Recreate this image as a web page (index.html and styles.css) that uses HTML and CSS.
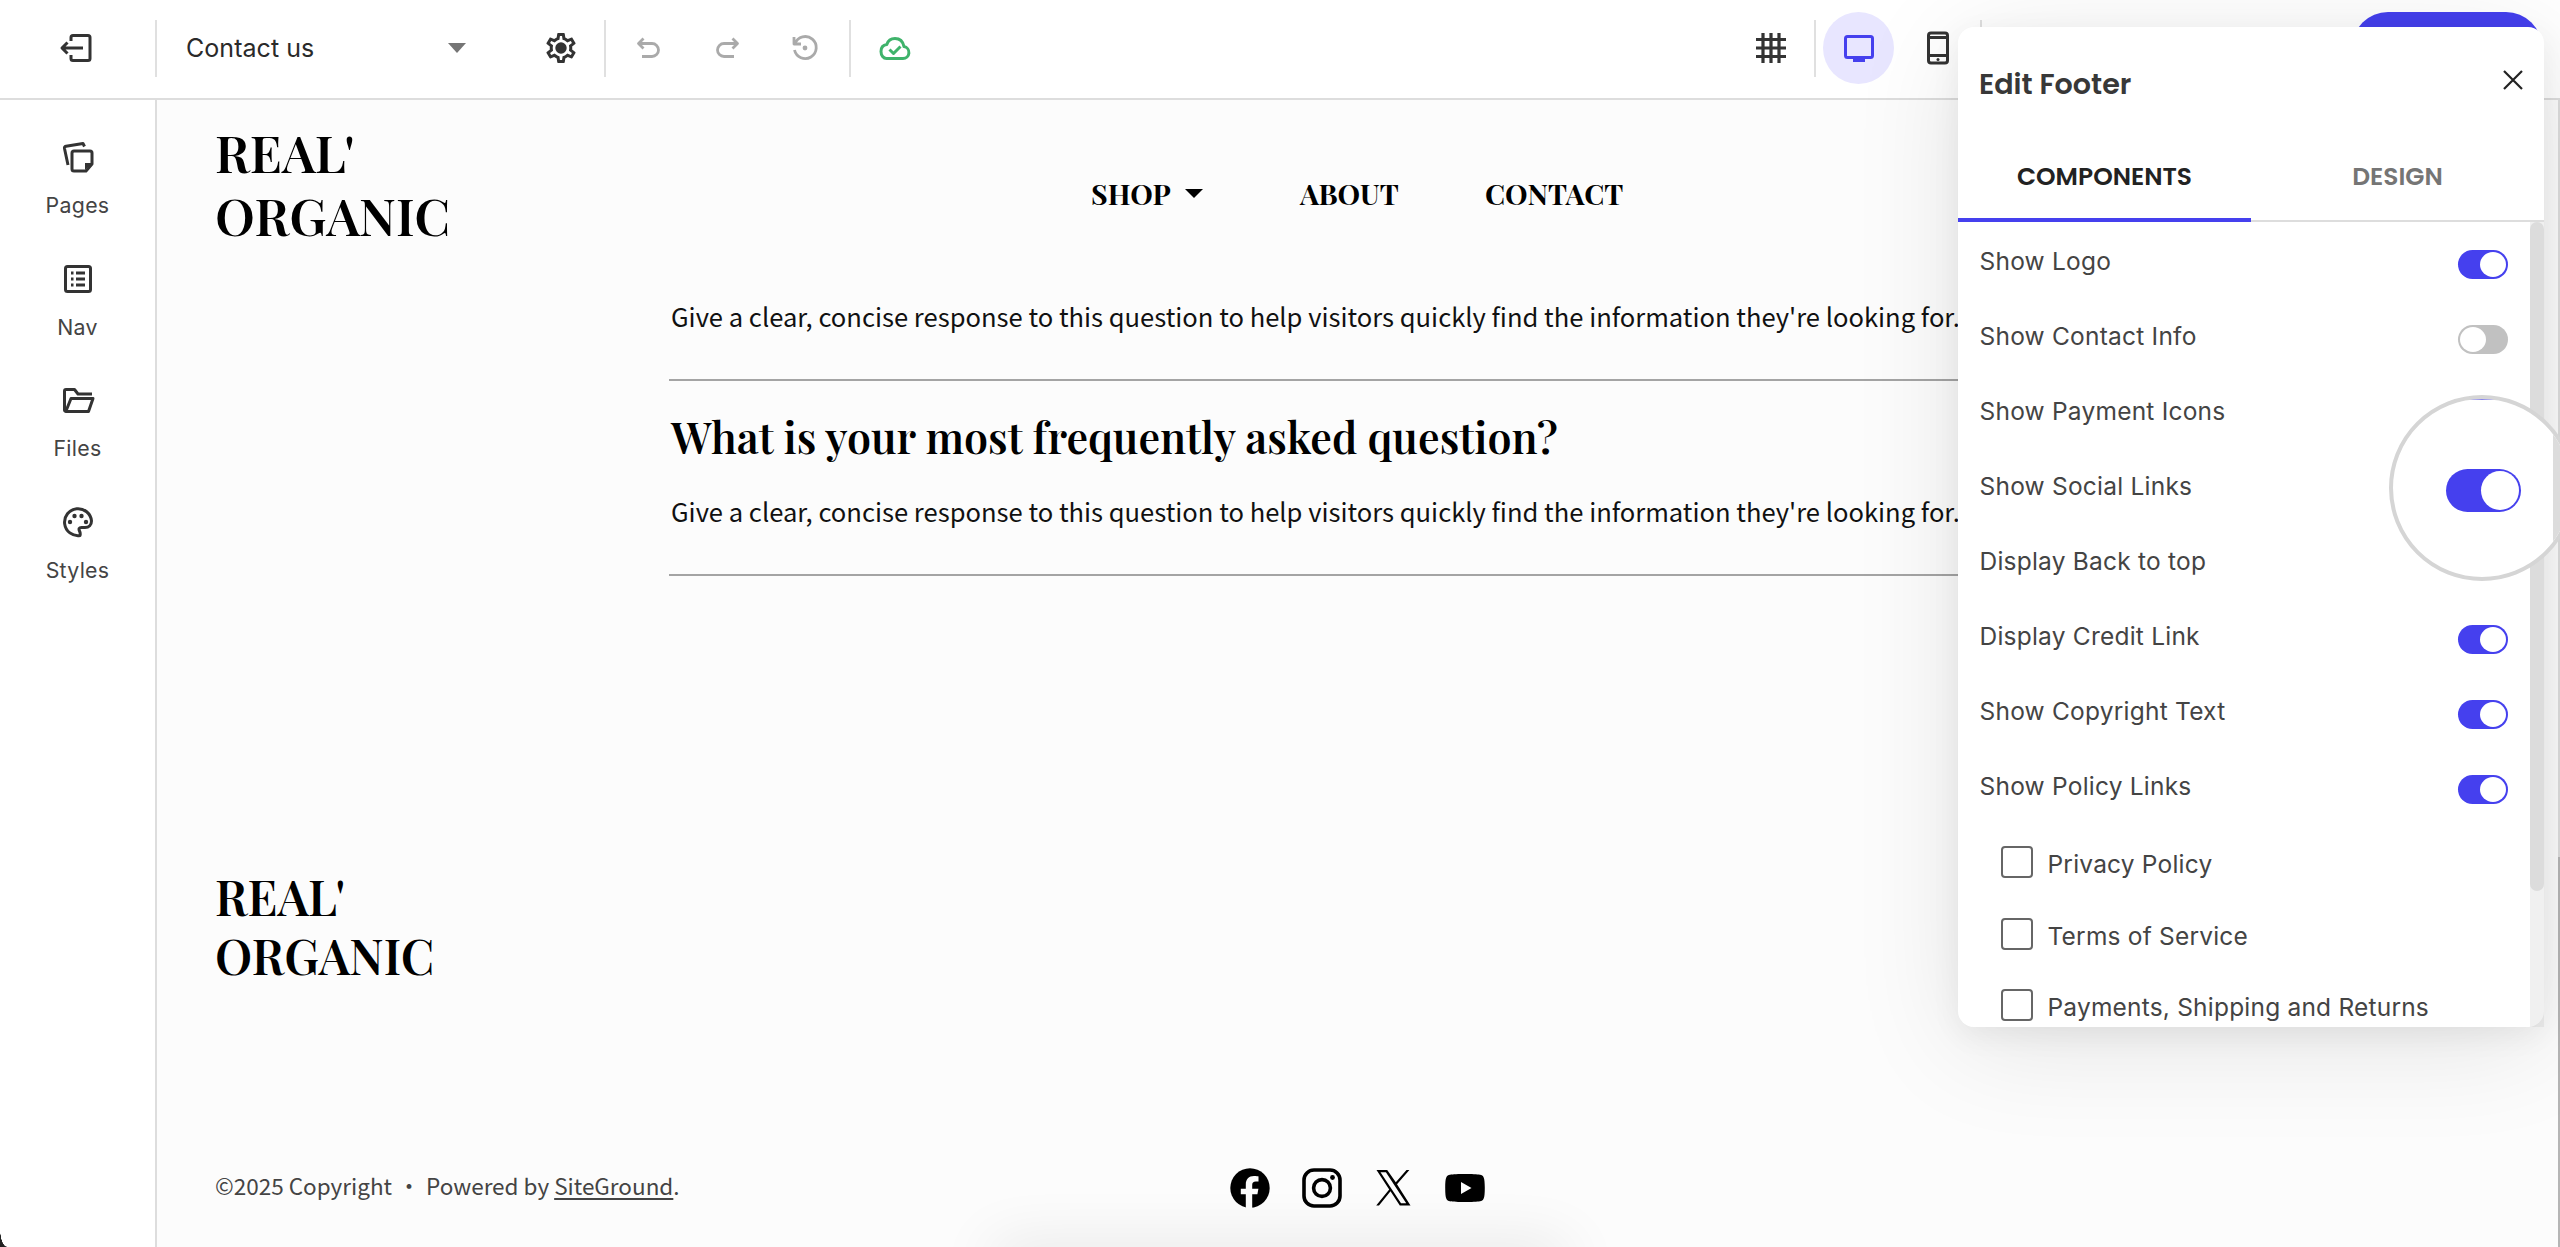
FILE: index.html
```html
<!DOCTYPE html>
<html lang="en">
<head>
<meta charset="utf-8">
<title>Contact us</title>
<link rel="stylesheet" href="styles.css">
</head>
<body>
<div class="app">
  <header class="topbar">
    <div class="exit">
      <svg width="36" height="36" viewBox="0 0 36 36" class="line"><path d="M13 11V7.500a2 2 0 0 1 2-2H30a2 2 0 0 1 2 2V28.500a2 2 0 0 1-2 2H15a2 2 0 0 1-2-2V25M25 18H4M9.500 12.500L4 18l5.500 5.500"/></svg>
    </div>
    <div class="page-select"><span class="page-name">Contact us</span><i class="caret"></i></div>
    <div class="gear">
      <svg width="36" height="36" viewBox="0 0 24 24"><path fill="#333" fill-rule="evenodd" d="M19.430 12.980c.04-.32.07-.64.07-.98s-.03-.66-.07-.98l2.110-1.650c.19-.15.24-.42.12-.64l-2-3.460c-.12-.22-.39-.3-.61-.22l-2.490 1c-.52-.4-1.080-.73-1.690-.98l-.38-2.650C14.460 2.180 14.250 2 14 2h-4c-.25 0-.46.18-.49.42l-.38 2.650c-.61.25-1.170.59-1.690.98l-2.490-1c-.23-.09-.49 0-.61.22l-2 3.460c-.13.22-.07.49.12.64l2.110 1.650c-.04.32-.07.65-.07.98s.03.66.07.98l-2.110 1.650c-.19.15-.24.42-.12.64l2 3.460c.12.22.39.3.61.22l2.490-1c.52.4 1.080.73 1.690.98l.38 2.650c.03.24.24.42.49.42h4c.25 0 .46-.18.49-.42l.38-2.650c.61-.25 1.170-.59 1.690-.98l2.490 1c.23.09.49 0 .61-.22l2-3.460c.12-.22.07-.49-.12-.64zM17.450 11.270c.04.31.05.52.05.73s-.02.43-.05.73l-.14 1.130.89.7 1.080.84-.7 1.210-1.270-.51-1.040-.42-.9.68c-.43.32-.84.56-1.250.73l-1.060.43-.16 1.130-.2 1.350h-1.400l-.19-1.350-.16-1.130-1.060-.43c-.43-.18-.83-.41-1.230-.71l-.91-.7-1.060.43-1.270.51-.7-1.210 1.080-.84.89-.7-.14-1.130C6.520 12.430 6.500 12.200 6.500 12s.02-.43.05-.73l.14-1.130-.89-.7L4.720 8.600l.7-1.210 1.270.51 1.040.42.9-.68c.43-.32.84-.56 1.250-.73l1.060-.43.16-1.130.2-1.350h1.390l.19 1.350.16 1.130 1.060.43c.43.18.83.41 1.230.71l.91.7 1.060-.43 1.270-.51.7 1.210-1.070.85-.89.7zM12 8.200a3.800 3.800 0 1 0 0 7.600 3.800 3.800 0 0 0 0-7.600z"/></svg>
    </div>
    <div class="history">
      <svg width="36" height="36" viewBox="0 0 36 36" class="line dim"><path d="M12.500 8.500L7.500 13.500l5 5M8 13.500h13a6.500 6.500 0 0 1 0 13H11"/></svg>
      <svg width="36" height="36" viewBox="0 0 36 36" class="line dim"><path d="M23.500 8.500l5 5-5 5M28 13.500H15a6.500 6.500 0 0 0 0 13H25"/></svg>
      <svg width="36" height="36" viewBox="0 0 36 36" class="line dim"><path d="M8 13.500a11 11 0 1 1-.5 6.500M7 7v7h7"/><circle cx="18" cy="18" r="2.400" class="dimfill"/></svg>
    </div>
    <div class="saved">
      <svg width="36" height="36" viewBox="0 0 36 36" class="line green"><path d="M9.500 28.500H26a6 6 0 0 0 1-11.900C26 11.500 22.500 8.500 18 8.500c-3.800 0-7 2.200-8.200 6C6 15 4 18 4 21.500c0 4 2.500 7 5.500 7zM12.500 19.500l4 4 7-7"/></svg>
    </div>
    <div class="view-tools">
      <svg class="grid-icon" width="36" height="36" viewBox="0 0 36 36"><path fill="none" stroke="#333" stroke-width="3.200" d="M10 3v30M18 3v30M26 3v30M3 9.500h30M3 18h30M3 26.500h30"/></svg>
      <div class="devices">
        <span class="device on"><svg width="36" height="36" viewBox="0 0 36 36"><rect x="4.500" y="6.500" width="27" height="21" rx="2" fill="none" stroke="#4540ee" stroke-width="3"/><path fill="#4540ee" d="M12 28h12v4H12z"/></svg></span>
        <span class="device"><svg width="36" height="36" viewBox="0 0 36 36"><rect x="8.500" y="3" width="19" height="30" rx="2.500" fill="none" stroke="#333" stroke-width="3"/><path stroke="#333" stroke-width="2.800" d="M8 7.500h20M8 25.500h20"/><circle cx="18" cy="29.500" r="1.500" fill="#333"/></svg></span>
      </div>
      <div class="publish-wrap"><span class="publish"></span></div>
    </div>
  </header>
  <div class="body">
    <nav class="rail">
      <div class="rail-item"><svg width="36" height="36" viewBox="0 0 36 36" class="line"><path d="M8 26L4.500 9.500a2 2 0 0 1 1.500-2.300L23 4.500l1.500 3M14 12h16a2 2 0 0 1 2 2v11l-6 7H14a2 2 0 0 1-2-2V14a2 2 0 0 1 2-2z"/><path d="M25 31v-7h7z" fill="#333" stroke="none"/></svg><span>Pages</span></div>
      <div class="rail-item"><svg width="36" height="36" viewBox="0 0 36 36" class="line"><rect x="5.500" y="5.500" width="25" height="25" rx="2"/><path d="M11 12h2.500M11 18h2.500M11 24h2.500M16 12h9M16 18h9M16 24h9"/></svg><span>Nav</span></div>
      <div class="rail-item"><svg width="36" height="36" viewBox="0 0 36 36" class="line"><path d="M32 12H18l-3.500-4.500H6a1.500 1.500 0 0 0-1.500 1.500V28a1.500 1.500 0 0 0 1.500 1.500H28.500L33 16.500H11L6 29"/></svg><span>Files</span></div>
      <div class="rail-item"><svg width="36" height="36" viewBox="0 0 36 36" class="line"><path d="M20 31.500A13.500 13.500 0 1 1 31.500 17c0 4-2.500 6.500-6.500 6.500h-3.500c-2.500 0-3 1.500-2 3.500s1 3 .5 4.500z"/><g class="dots"><circle cx="10" cy="18" r="2.200"/><circle cx="14.500" cy="12" r="2.200"/><circle cx="21.500" cy="12" r="2.200"/><circle cx="26" cy="18" r="2.200"/></g></svg><span>Styles</span></div>
    </nav>
    <main class="canvas">
      <div class="site-header">
        <div class="logo">REAL'<br>ORGANIC</div>
        <div class="site-nav"><span class="n1">SHOP</span><i class="tri"></i><span class="n2">ABOUT</span><span class="n3">CONTACT</span></div>
      </div>
      <section class="faq">
        <p class="answer">Give a clear, concise response to this question to help visitors quickly find the information they're looking for.</p>
        <h2 class="question">What is your most frequently asked question?</h2>
        <p class="answer">Give a clear, concise response to this question to help visitors quickly find the information they're looking for.</p>
      </section>
      <footer class="site-footer">
        <div class="logo small">REAL'<br>ORGANIC</div>
        <div class="footer-row">
          <p class="copy"><span>©2025 Copyright</span><span class="dot">·</span><span>Powered by <u>SiteGround</u>.</span></p>
          <div class="social">
            <svg width="40" height="40" viewBox="0 0 40 40"><circle cx="20" cy="20" r="19.700"/><path fill="#fcfcfc" d="M15.800 40V26.300h-5v-5.600h5v-4c0-5.600 3-8.600 8.200-8.600 2 0 4.500.4 4.500.4v5h-2.700c-2.600 0-3.600 1.500-3.600 3.400v3.800h6.200l-1 5.600h-5.200V40z"/></svg>
            <svg width="40" height="40" viewBox="0 0 40 40"><rect x="2" y="2" width="36" height="36" rx="10" fill="none" stroke="#000" stroke-width="3.600"/><circle cx="20" cy="20" r="8.400" fill="none" stroke="#000" stroke-width="3.600"/><circle cx="30.500" cy="9.500" r="2.400"/></svg>
            <svg width="40" height="40" viewBox="0 0 40 40"><path fill-rule="evenodd" d="M3.500 2h10.700l8.600 12.200L33.500 2h2.900L24 16.200 37.500 37.500H26.800L17.500 23.300 6 37.500H3.200L16.200 21.400zM7.500 4.300L28 35.300h5.200L12.900 4.300z"/></svg>
            <svg width="40" height="40" viewBox="0 0 40 40"><path fill-rule="evenodd" d="M5 6.800C10 5.800 30 5.800 35 6.800c3.500.6 4.800 2 4.800 13.200S38.500 32.600 35 33.200c-5 1-25 1-30 0C1.500 32.600.2 31.200.2 20S1.500 7.400 5 6.800zM16 14v12l10.500-6z"/></svg>
          </div>
        </div>
      </footer>
      <div class="dock-shadow"></div>
    </main>
  </div>
  <aside class="panel">
    <div class="panel-head"><span class="panel-title">Edit Footer</span><svg width="20" height="20" viewBox="0 0 20 20"><path stroke="#222" stroke-width="2.200" d="M1 1l18 18M19 1L1 19"/></svg></div>
    <div class="tabs"><span class="tab active">COMPONENTS</span><span class="tab">DESIGN</span></div>
    <div class="panel-body">
      <div class="options">
        <div class="row"><span>Show Logo</span><i class="toggle on"></i></div>
        <div class="row"><span>Show Contact Info</span><i class="toggle"></i></div>
        <div class="row"><span>Show Payment Icons</span><i class="toggle on"></i></div>
        <div class="row"><span>Show Social Links</span><i class="toggle on"></i></div>
        <div class="row"><span>Display Back to top</span><i class="toggle on"></i></div>
        <div class="row"><span>Display Credit Link</span><i class="toggle on"></i></div>
        <div class="row"><span>Show Copyright Text</span><i class="toggle on"></i></div>
        <div class="row"><span>Show Policy Links</span><i class="toggle on"></i></div>
        <div class="check"><i class="box"></i><span>Privacy Policy</span></div>
        <div class="check"><i class="box"></i><span>Terms of Service</span></div>
        <div class="check"><i class="box"></i><span>Payments, Shipping and Returns</span></div>
      </div>
      <div class="scroll"><div class="thumb"></div></div>
    </div>
  </aside>
  <div class="lens"><i class="sliver"></i><i class="toggle on big"></i><i class="lens-bar"></i></div>
  <i class="page-scroll"></i>
  <i class="corner"></i>
</div>
</body>
</html>
```

FILE: styles.css
```css
* { box-sizing: border-box; }
body { margin: 0; background: #fff; }
i { display: block; font-style: normal; }
svg { display: block; flex: none; }

.app {
  position: relative;
  width: 2560px;
  height: 1247px;
  overflow: hidden;
  font-family: Inter, "Liberation Sans", sans-serif;
  color: #444;
}

.line { fill: none; stroke: #333; stroke-width: 3; stroke-linejoin: round; }
.dim { stroke: #aaa; stroke-width: 2.8; }
.dimfill { fill: #aaa; stroke: none; }
.green { stroke: #3fb36b; stroke-width: 3; }
.dots { fill: #333; stroke: none; }

/* top bar */
.topbar {
  display: flex;
  align-items: center;
  height: 100px;
  padding-bottom: 2px;
  border-bottom: 2px solid #ddd;
  background: #fff;
}
.topbar > div { height: 57px; display: flex; align-items: center; }
.exit { width: 155px; padding-left: 58px; }
.page-select {
  width: 365px;
  border-left: 2px solid #e0e0e0;
  padding: 0 54px 0 29px;
  justify-content: space-between;
}
.page-name { font-size: 25px; letter-spacing: 0.05px; color: #2a2a2a; white-space: nowrap; }
.caret {
  border: 9px solid transparent;
  border-top: 10px solid #757575;
  border-bottom: 0;
}
.gear { width: 84px; padding-left: 23px; }
.history {
  width: 245px;
  gap: 42px;
  border-left: 2px solid #e0e0e0;
  padding-left: 25px;
}
.saved { width: 61px; border-left: 2px solid #e0e0e0; padding-left: 26px; }
.topbar > .view-tools { flex: 1; padding-left: 843px; }
.grid-icon { margin-right: 25px; }
.devices {
  display: flex;
  align-items: center;
  height: 57px;
  width: 168px;
  padding-left: 7px;
  border-left: 2px solid #e0e0e0;
  border-right: 2px solid #e0e0e0;
}
.device {
  display: flex;
  align-items: center;
  justify-content: center;
  flex: none;
  width: 71px;
  height: 72px;
  border-radius: 50%;
}
.device + .device { margin-left: 8px; }
.device.on { background: #e8e6ff; }
.publish-wrap { padding-left: 370px; }
.publish { display: block; width: 190px; height: 72px; border-radius: 36px; background: #4540ee; }

/* body */
.body { display: flex; height: 1147px; }
.rail {
  width: 157px;
  flex: none;
  border-right: 2px solid #ddd;
  background: #fff;
  padding-top: 39px;
}
.rail-item {
  display: flex;
  flex-direction: column;
  align-items: center;
  height: 121.5px;
  gap: 16px;
  font-size: 21.3px;
  line-height: 28px;
  letter-spacing: 0.3px;
}

.canvas {
  position: relative;
  flex: 1;
  background: #fcfcfc;
  color: #000;
}
.logo {
  font: 600 51.5px/62.7px "Playfair Display", "Liberation Serif", serif;
  height: 126px;
  white-space: nowrap;
}
.site-header { display: flex; height: 178px; padding: 21px 0 0 58px; }
.site-header .logo { width: 876px; }
.site-nav {
  display: flex;
  height: 34px;
  margin-top: 55px;
  align-items: center;
  font: bold 28.5px/34px "Playfair Display", "Liberation Serif", serif;
}
.n1 { width: 94px; }
.n2 { width: 185px; margin-left: 97px; }
.tri { border: 9px solid transparent; border-top: 9px solid #000; border-bottom: 0; }

.faq { width: 1880px; padding-left: 512px; }
.answer {
  margin: 0;
  height: 103px;
  border-bottom: 2px solid #a4a4a4;
  padding: 19px 0 0 2px;
  font: 25.57px/37px "Source Sans Pro", "Noto Sans CJK SC", sans-serif;
  color: #111;
  white-space: nowrap;
}
.question {
  margin: 0;
  height: 92px;
  padding: 29px 0 0 2px;
  font: 600 42.9px/54px "Playfair Display", "Liberation Serif", serif;
  white-space: nowrap;
}

.site-footer { padding: 291px 0 0 58px; }
.logo.small { font-size: 48px; line-height: 58.5px; height: 301px; }
.footer-row { display: flex; align-items: flex-start; }
.copy {
  display: flex;
  width: 1015px;
  margin: 0;
  font: 22.5px/34px "Source Sans Pro", "Noto Sans CJK SC", sans-serif;
  color: #444;
  white-space: nowrap;
}
.dot { width: 34px; text-align: center; }
.copy u { text-underline-offset: 3px; text-decoration-thickness: 2px; }
.social { display: flex; gap: 31.5px; }
.dock-shadow {
  position: absolute;
  left: 833px;
  bottom: -30px;
  width: 580px;
  height: 30px;
  border-radius: 30px;
  box-shadow: 0 0 60px rgba(0, 0, 0, 0.12);
}

/* floating panel */
.panel {
  position: absolute;
  left: 1958px;
  top: 27px;
  width: 586px;
  height: 1000px;
  display: flex;
  flex-direction: column;
  background: #fff;
  border-radius: 16px 16px 0 16px;
  overflow: hidden;
}
.app::after {
  content: "";
  position: absolute;
  left: 1958px;
  top: 27px;
  width: 586px;
  height: 1000px;
  border-radius: 16px;
  box-shadow: 0 16px 110px rgba(0, 0, 0, 0.1), 0 8px 30px rgba(0, 0, 0, 0.06);
  pointer-events: none;
}
.panel-head {
  display: flex;
  justify-content: space-between;
  height: 104px;
  padding: 39px 21px 0 21px;
}
.panel-head svg { margin-top: 4px; }
.panel-title { font: 600 28.6px/36px Poppins, Inter, sans-serif; color: #383838; }
.tabs { display: flex; height: 91px; border-bottom: 2px solid #ddd; }
.tab {
  flex: 1;
  height: 91px;
  padding-top: 29px;
  text-align: center;
  font: 600 24.9px/34px Poppins, Inter, sans-serif;
  color: #757575;
}
.tab.active { color: #222; border-bottom: 4px solid #4540ee; }
.panel-body { flex: 1; display: flex; min-height: 0; }
.options { flex: 1; padding: 24px 22px 0 21.5px; overflow: hidden; }
.row {
  display: flex;
  justify-content: space-between;
  height: 75px;
  font-size: 24.5px;
  line-height: 30px;
  letter-spacing: 0.22px;
}
.toggle {
  width: 50px;
  height: 29px;
  padding: 2px;
  border-radius: 15px;
  background: #c1c1c1;
  margin-top: 4px;
}
.toggle::after {
  content: "";
  display: block;
  width: 26px;
  height: 25px;
  border-radius: 50%;
  background: #fff;
}
.toggle.on { background: #4540ee; }
.toggle.on::after { margin-left: auto; }
.check {
  display: flex;
  height: 71.5px;
  padding: 0 0 0 21px;
  gap: 15px;
  font-size: 24.5px;
  line-height: 36px;
  letter-spacing: 0.2px;
  white-space: nowrap;
}
.box { flex: none; width: 32px; height: 32px; border: 2px solid #666; border-radius: 4px; }
.scroll { width: 14px; background: #f0f0f0; }
.thumb { height: 669px; border-radius: 7px; background: #dcdcdc; }

/* magnified toggle */
.lens {
  position: absolute;
  left: 2389px;
  top: 395px;
  width: 186px;
  height: 186px;
  border: 4px solid #d5d5d5;
  border-radius: 50%;
  background: #fff;
  overflow: hidden;
  z-index: 2;
}
.sliver { width: 26px; height: 2px; margin: -1px 0 0 76px; background: #8a87e6; }
.toggle.big { width: 75px; height: 43px; border-radius: 22px; margin: 69px 0 0 53px; }
.toggle.big::after { width: 38px; height: 39px; }
.lens-bar { position: absolute; left: 160px; top: 0; width: 30px; height: 178px; background: #dcdcdc; }
.page-scroll {
  position: absolute;
  left: 2558px;
  top: 100px;
  width: 2px;
  height: 1147px;
  background: linear-gradient(#ddd 757px, #b5b5b5 757px);
}
.corner {
  position: absolute;
  left: 0;
  bottom: 0;
  width: 7px;
  height: 18px;
  background: radial-gradient(ellipse 7px 18px at 100% 0, transparent 96%, #222 100%);
}
```
